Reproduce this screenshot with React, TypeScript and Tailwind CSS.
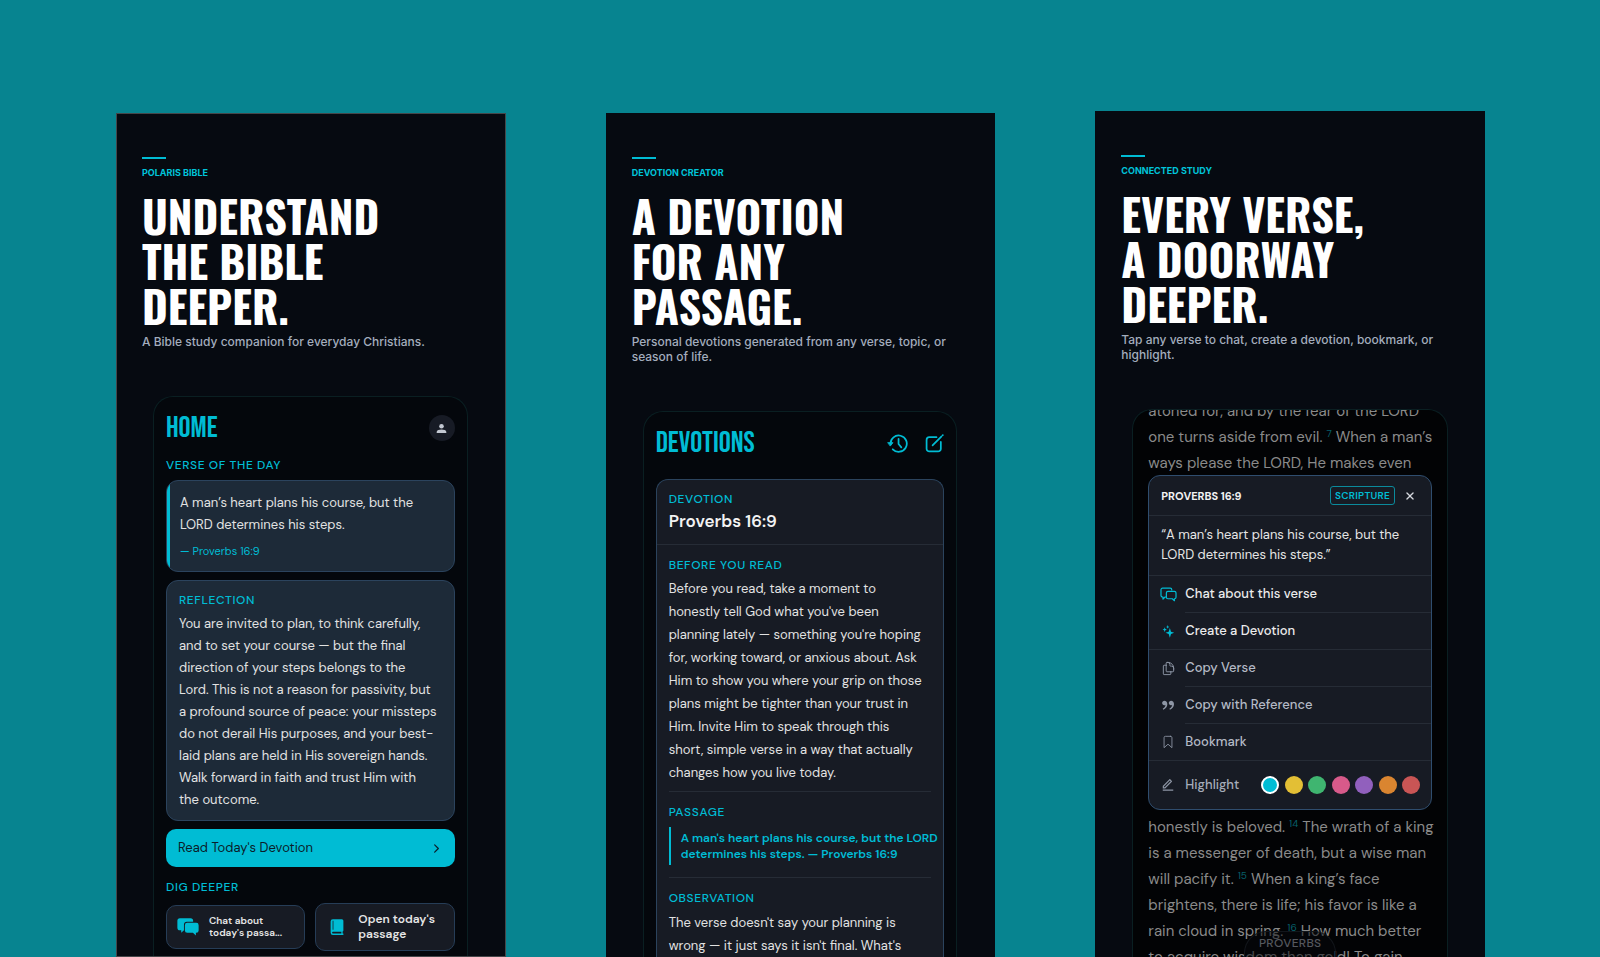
import React from "react";
import { IoBookmarkOutline, IoChevronForward, IoClose } from "react-icons/io5";
import { RiDoubleQuotesR, RiEditLine } from "react-icons/ri";
import { HiOutlineDocumentDuplicate } from "react-icons/hi2";

type IconProps = { className?: string };

function ChatIcon({ className }: IconProps) {
  return (
    <svg viewBox="0 0 24 24" className={className} fill="none" stroke="currentColor" strokeWidth="1.7" strokeLinejoin="round" strokeLinecap="round" aria-hidden="true">
      <path d="M9 15.5H7.2L4.2 18.5V15.5H3.6A2.2 2.2 0 0 1 1.4 13.3V5.2A2.2 2.2 0 0 1 3.6 3H14.4A2.2 2.2 0 0 1 16.6 5.2V5.6" />
      <path d="M11.2 7.6H20.4A2.2 2.2 0 0 1 22.6 9.8V15.8A2.2 2.2 0 0 1 20.4 18V20.8L17.4 18H11.2A2.2 2.2 0 0 1 9 15.8V9.8A2.2 2.2 0 0 1 11.2 7.6Z" />
    </svg>
  );
}

function ChatSolidIcon({ className }: IconProps) {
  return (
    <svg viewBox="0 0 24 24" className={className} fill="currentColor" aria-hidden="true">
      <path d="M3.2 2.4H14.8A2.8 2.8 0 0 1 17.6 5.2V6.2H10.8A3.2 3.2 0 0 0 7.6 9.4V15.6L4.6 18.4V15.6H3.2A2.8 2.8 0 0 1 .4 12.8V5.2A2.8 2.8 0 0 1 3.2 2.4Z" />
      <path d="M11.2 7.4H21A2.6 2.6 0 0 1 23.6 10V15.8A2.6 2.6 0 0 1 21 18.4H20.6V21.4L17.4 18.4H11.2A2.6 2.6 0 0 1 8.6 15.8V10A2.6 2.6 0 0 1 11.2 7.4Z" />
    </svg>
  );
}

function BookIcon({ className }: IconProps) {
  return (
    <svg viewBox="0 0 24 24" className={className} fill="currentColor" aria-hidden="true">
      <path fillRule="evenodd" d="M6.5 1.5H18.5A2 2 0 0 1 20.5 3.5V16.5A1.8 1.8 0 0 1 19.5 18V20.6H20.5V22.5H6.5A3 3 0 0 1 3.5 19.5V4.5A3 3 0 0 1 6.5 1.5ZM6.6 18.3A1.15 1.15 0 0 0 6.6 20.6H17.8V18.3ZM6.2 3.6V15.8H7.2V3.6Z" />
    </svg>
  );
}

function HistoryIcon({ className }: IconProps) {
  return (
    <svg viewBox="0 0 24 24" className={className} fill="none" stroke="currentColor" strokeWidth="2" strokeLinecap="round" strokeLinejoin="round" aria-hidden="true">
      <path d="M4 12.5A9.3 9.3 0 1 1 6.6 18.6" />
      <path d="M1.2 11H6.8L4 14.6Z" fill="currentColor" strokeWidth="1" />
      <path d="M13.2 6.6V12.5L16.4 16.4" />
    </svg>
  );
}

function ComposeIcon({ className }: IconProps) {
  return (
    <svg viewBox="0 0 24 24" className={className} fill="none" stroke="currentColor" strokeWidth="2.2" strokeLinecap="round" strokeLinejoin="round" aria-hidden="true">
      <path d="M14.5 4H5.5A3.5 3.5 0 0 0 2 7.5V18.5A3.5 3.5 0 0 0 5.5 22H16.5A3.5 3.5 0 0 0 20 18.5V10" />
      <path d="M20.6 3.2L10.8 13L9.6 14.4" />
      <path d="M22.5 1.4L22.2 1.7" />
    </svg>
  );
}

function SparkleIcon({ className }: IconProps) {
  return (
    <svg viewBox="0 0 24 24" className={className} fill="currentColor" aria-hidden="true">
      <path d="M14.5 5.5L16.6 12.4L22.5 14.5L16.6 16.6L14.5 23.5L12.4 16.6L6.5 14.5L12.4 12.4Z" />
      <path d="M5 4L6.2 7.3L9 8.5L6.2 9.7L5 13L3.8 9.7L1 8.5L3.8 7.3Z" />
      <path d="M10.5 0L11.4 2.6L13.5 3.5L11.4 4.4L10.5 7L9.6 4.4L7.5 3.5L9.6 2.6Z" />
    </svg>
  );
}

function PersonIcon({ className }: IconProps) {
  return (
    <svg viewBox="0 0 24 24" className={className} fill="currentColor" aria-hidden="true">
      <circle cx="12" cy="7" r="5" />
      <path d="M1.5 22V19.5C1.5 15.5 7 14 12 14S22.5 15.5 22.5 19.5V22Z" />
    </svg>
  );
}

type PanelProps = {
  eyebrow: string;
  lines: string[];
  subtitle: string;
  className?: string;
  children: React.ReactNode;
};

function Panel({ eyebrow, lines, subtitle, className = "", children }: PanelProps) {
  return (
    <section className={`flex min-w-0 flex-1 flex-col overflow-hidden bg-[#060a11] pt-11 ${className}`}>
      <div className="px-[26px]">
        <div className="h-[2px] w-6 bg-[#00bcd4]" />
        <p className="mt-2 font-['Inter',sans-serif] text-[9px] leading-3 font-bold text-[#00c4da]">{eyebrow}</p>
        <h1 className="mt-[14px] font-['Oswald',sans-serif] text-[44px] leading-[45px] font-bold text-white">
          {lines.map((l) => (
            <span key={l} className="block whitespace-nowrap">{l}</span>
          ))}
        </h1>
        <p className="mt-[6px] font-['Inter',sans-serif] text-[12px] leading-[15px] font-medium text-[#a3adbd]">{subtitle}</p>
      </div>
      {children}
    </section>
  );
}

function Label({ children }: { children: React.ReactNode }) {
  return <h3 className="text-[12px] leading-4 font-medium tracking-wider text-[#00bcd4]">{children}</h3>;
}

const phone = "mt-[47px] mr-[38px] ml-[37px] flex-1 rounded-t-[20px] border border-b-0 border-[#0a1f22] bg-[#04070c] px-3 pt-[17px]";

function HomeScreen() {
  return (
    <div className={phone}>
      <div className="flex items-center justify-between">
        <h2 className="font-['Bebas_Neue',sans-serif] text-[30px] leading-7 text-[#00bcd4]">HOME</h2>
        <button aria-label="Profile" className="flex size-[26px] items-center justify-center rounded-full bg-[#171b25] text-[#c3c8d2]">
          <PersonIcon className="size-[11px]" />
        </button>
      </div>
      <div className="mt-[15px]">
        <Label>VERSE OF THE DAY</Label>
      </div>
      <div className="mt-[7px] overflow-hidden rounded-xl border border-[#2b435d] bg-[#1d2a38]">
        <blockquote className="border-l-[3px] border-[#00bcd4] pt-[11px] pb-3 pl-[10px] text-[13px] leading-[22px] text-[#e2e2e2]">
          A man’s heart plans his course, but the
          <br />
          LORD determines his steps.
          <cite className="mt-[7px] block text-[11px] leading-4 text-[#00bcd4] not-italic">— Proverbs 16:9</cite>
        </blockquote>
      </div>
      <div className="mt-2 rounded-xl border border-[#2b435d] bg-[#1d2a38] pt-[11px] pr-2 pb-[9px] pl-3">
        <Label>REFLECTION</Label>
        <p className="mt-[5px] text-[13px] leading-[22px] whitespace-pre-line text-[#e2e2e2]">
          {`You are invited to plan, to think carefully,
          and to set your course — but the final
          direction of your steps belongs to the
          Lord. This is not a reason for passivity, but
          a profound source of peace: your missteps
          do not derail His purposes, and your best-
          laid plans are held in His sovereign hands.
          Walk forward in faith and trust Him with
          the outcome.`}
        </p>
      </div>
      <button className="mt-2 flex h-[38px] w-full items-center justify-between rounded-[10px] bg-[#00bcd4] px-3 text-[13px] text-[#0b1d2a]">
        Read Today's Devotion
        <IoChevronForward className="size-[13px]" />
      </button>
      <div className="mt-3">
        <Label>DIG DEEPER</Label>
      </div>
      <div className="mt-2 grid grid-cols-2 items-center gap-[10px]">
        <button className="flex h-11 items-center gap-[10px] rounded-[10px] border border-[#263d57] bg-[#171b24] px-[10px] text-left text-[10px] leading-3 font-semibold text-[#e6e6e6]">
          <ChatSolidIcon className="size-[22px] shrink-0 text-[#00bcd4]" />
          <span>
            Chat about
            <br />
            today's passa...
          </span>
        </button>
        <button className="flex h-12 items-center gap-3 rounded-[10px] border border-[#263d57] bg-[#171b24] px-3 text-left text-[12px] leading-[15px] font-semibold text-[#e6e6e6]">
          <BookIcon className="size-[18px] shrink-0 text-[#00bcd4]" />
          <span>
            Open today's
            <br />
            passage
          </span>
        </button>
      </div>
    </div>
  );
}

function DevotionScreen() {
  return (
    <div className={phone}>
      <div className="flex items-center justify-between text-[#00bcd4]">
        <h2 className="font-['Bebas_Neue',sans-serif] text-[30px] leading-7">DEVOTIONS</h2>
        <div className="flex items-center gap-[17px]">
          <button aria-label="History"><HistoryIcon className="size-[21px]" /></button>
          <button aria-label="New devotion"><ComposeIcon className="size-[19px]" /></button>
        </div>
      </div>
      <article className="mt-[22px] rounded-t-xl border border-b-0 border-[#2b435d] bg-[#171b24]">
        <header className="border-b border-[#262c36] px-3 pt-[11px] pb-3">
          <Label>DEVOTION</Label>
          <p className="mt-[3px] text-[17px] leading-[22px] font-semibold text-[#f2f2f2]">Proverbs 16:9</p>
        </header>
        <div className="px-3 pt-3">
          <Label>BEFORE YOU READ</Label>
          <p className="mt-1 text-[13px] leading-[23px] whitespace-pre-line text-[#e2e2e2]">
            {`Before you read, take a moment to
            honestly tell God what you've been
            planning lately — something you're hoping
            for, working toward, or anxious about. Ask
            Him to show you where your grip on those
            plans might be tighter than your trust in
            Him. Invite Him to speak through this
            short, simple verse in a way that actually
            changes how you live today.`}
          </p>
          <hr className="mt-[7px] mb-3 border-[#262c36]" />
          <Label>PASSAGE</Label>
          <blockquote className="mt-[7px] border-l-2 border-[#00bcd4] py-[3px] pl-[10px] text-[12px] leading-4 font-semibold whitespace-nowrap text-[#00bcd4]">
            A man's heart plans his course, but the LORD
            <br />
            determines his steps. — Proverbs 16:9
          </blockquote>
          <hr className="mt-3 mb-3 border-[#262c36]" />
          <Label>OBSERVATION</Label>
          <p className="mt-[5px] text-[13px] leading-[23px] whitespace-pre-line text-[#e2e2e2]">
            {`The verse doesn't say your planning is
            wrong — it just says it isn't final. What's`}
          </p>
        </div>
      </article>
    </div>
  );
}

type Line = (string | number)[];

// numbers are verse markers
const above: Line[] = [
  ["atoned for, and by the fear of the LORD"],
  ["one turns aside from evil. ", 7, " When a man’s"],
  ["ways please the LORD, He makes even"],
];

const below: Line[] = [
  ["honestly is beloved. ", 14, " The wrath of a king"],
  ["is a messenger of death, but a wise man"],
  ["will pacify it. ", 15, " When a king’s face"],
  ["brightens, there is life; his favor is like a"],
  ["rain cloud in spring. ", 16, " How much better"],
  ["to acquire wisdom than gold! To gain"],
];

function Verses({ lines }: { lines: Line[] }) {
  return (
    <>
      {lines.map((line, i) => (
        <p key={i} className="whitespace-nowrap">
          {line.map((part, j) =>
            typeof part === "number" ? (
              <sup key={j} className="text-[10px] text-[#06606b]">{part}</sup>
            ) : (
              <React.Fragment key={j}>{part}</React.Fragment>
            ),
          )}
        </p>
      ))}
    </>
  );
}

const actions = [
  { label: "Chat about this verse", icon: ChatIcon, size: "size-[17px]", strong: true, inset: true },
  { label: "Create a Devotion", icon: SparkleIcon, size: "size-[13px]", strong: true, inset: false },
  { label: "Copy Verse", icon: HiOutlineDocumentDuplicate, size: "size-[15px]", strong: false, inset: true },
  { label: "Copy with Reference", icon: RiDoubleQuotesR, size: "size-4", strong: false, inset: true },
  { label: "Bookmark", icon: IoBookmarkOutline, size: "size-[14px]", strong: false, inset: false },
];

const swatches = [
  { name: "Yellow", color: "bg-[#e3bf35]" },
  { name: "Green", color: "bg-[#3fb570]" },
  { name: "Pink", color: "bg-[#d75a8a]" },
  { name: "Purple", color: "bg-[#9160bd]" },
  { name: "Orange", color: "bg-[#da8530]" },
  { name: "Red", color: "bg-[#c95555]" },
];

function VerseMenu() {
  return (
    <div role="dialog" aria-label="Proverbs 16:9" className="-mt-px mr-[15px] mb-1 rounded-xl border border-[#2f4d6e] bg-[#171b24]">
      <div className="flex h-10 items-center border-b border-[#262c36] px-3">
        <h2 className="text-[11px] font-bold text-[#f2f2f2]">PROVERBS 16:9</h2>
        <span className="ml-auto rounded-[3px] border border-[#0b8a9c] px-1 text-[10px] leading-[17px] font-semibold tracking-wide text-[#00bcd4]">SCRIPTURE</span>
        <button aria-label="Close" className="mr-[2px] ml-2 text-[#d5d8de]"><IoClose className="size-[14px]" /></button>
      </div>
      <p className="border-b border-[#262c36] px-3 pt-[9px] pb-[10px] text-[13px] leading-5 text-[#e6e6e6]">
        “A man’s heart plans his course, but the
        <br />
        LORD determines his steps.”
      </p>
      {actions.map((a) => (
        <div key={a.label} className={a.inset ? "" : "border-b border-[#262c36]"}>
          <button className="flex w-full text-left">
            <span className={`flex h-9 w-9 items-center justify-center pl-[2px] ${a.strong ? "text-[#00bcd4]" : "text-[#8e96a5]"}`}>
              <a.icon className={a.size} />
            </span>
            <span className={`flex-1 text-[13px] leading-9 font-medium ${a.inset ? "border-b border-[#262c36]" : ""} ${a.strong ? "text-[#ececec]" : "text-[#b4bac6]"}`}>{a.label}</span>
          </button>
        </div>
      ))}
      <div className="flex h-12 items-center pr-[11px] text-[13px] font-medium text-[#a6adba]">
        <span className="flex w-9 justify-center pl-[2px] text-[#8e96a5]"><RiEditLine className="size-[14px]" /></span>
        Highlight
        <div className="ml-auto flex w-[159px] justify-between">
          <button aria-label="Cyan" aria-pressed="true" className="size-[18px] rounded-full border-2 border-white bg-[#00bcd4]" />
          {swatches.map((s) => (
            <button key={s.name} aria-label={s.name} className={`size-[18px] rounded-full ${s.color}`} />
          ))}
        </div>
      </div>
    </div>
  );
}

function StudyScreen() {
  return (
    <div className="relative mx-[37px] mt-[47px] flex-1 overflow-hidden rounded-t-[20px] border border-b-0 border-[#0a1f22] bg-[#020305] pl-[15px] text-[15px] leading-[26px] text-[#8a8a8a]">
      <div className="-mt-3">
        <Verses lines={above} />
        <VerseMenu />
        <Verses lines={below} />
      </div>
      <div className="absolute bottom-0 left-1/2 h-[26px] w-[92px] -translate-x-1/2 rounded-t-[22px] border border-b-0 border-[#12161b] bg-[#06080c]/50 pt-[3px] text-center text-[12px] leading-4 font-medium tracking-wide text-[#55585e]">
        PROVERBS
      </div>
    </div>
  );
}

export default function App() {
  return (
    <main className="flex h-screen gap-[100px] overflow-hidden bg-[#078490] pr-[115px] pl-[116px] font-['DM_Sans',sans-serif]">
      <Panel eyebrow="POLARIS BIBLE" lines={["UNDERSTAND", "THE BIBLE", "DEEPER."]} subtitle="A Bible study companion for everyday Christians." className="mt-[113px] outline -outline-offset-1 outline-[#45474a]">
        <HomeScreen />
      </Panel>
      <Panel eyebrow="DEVOTION CREATOR" lines={["A DEVOTION", "FOR ANY", "PASSAGE."]} subtitle="Personal devotions generated from any verse, topic, or season of life." className="mt-[113px]">
        <DevotionScreen />
      </Panel>
      <Panel eyebrow="CONNECTED STUDY" lines={["EVERY VERSE,", "A DOORWAY", "DEEPER."]} subtitle="Tap any verse to chat, create a devotion, bookmark, or highlight." className="mt-[111px]">
        <StudyScreen />
      </Panel>
    </main>
  );
}
